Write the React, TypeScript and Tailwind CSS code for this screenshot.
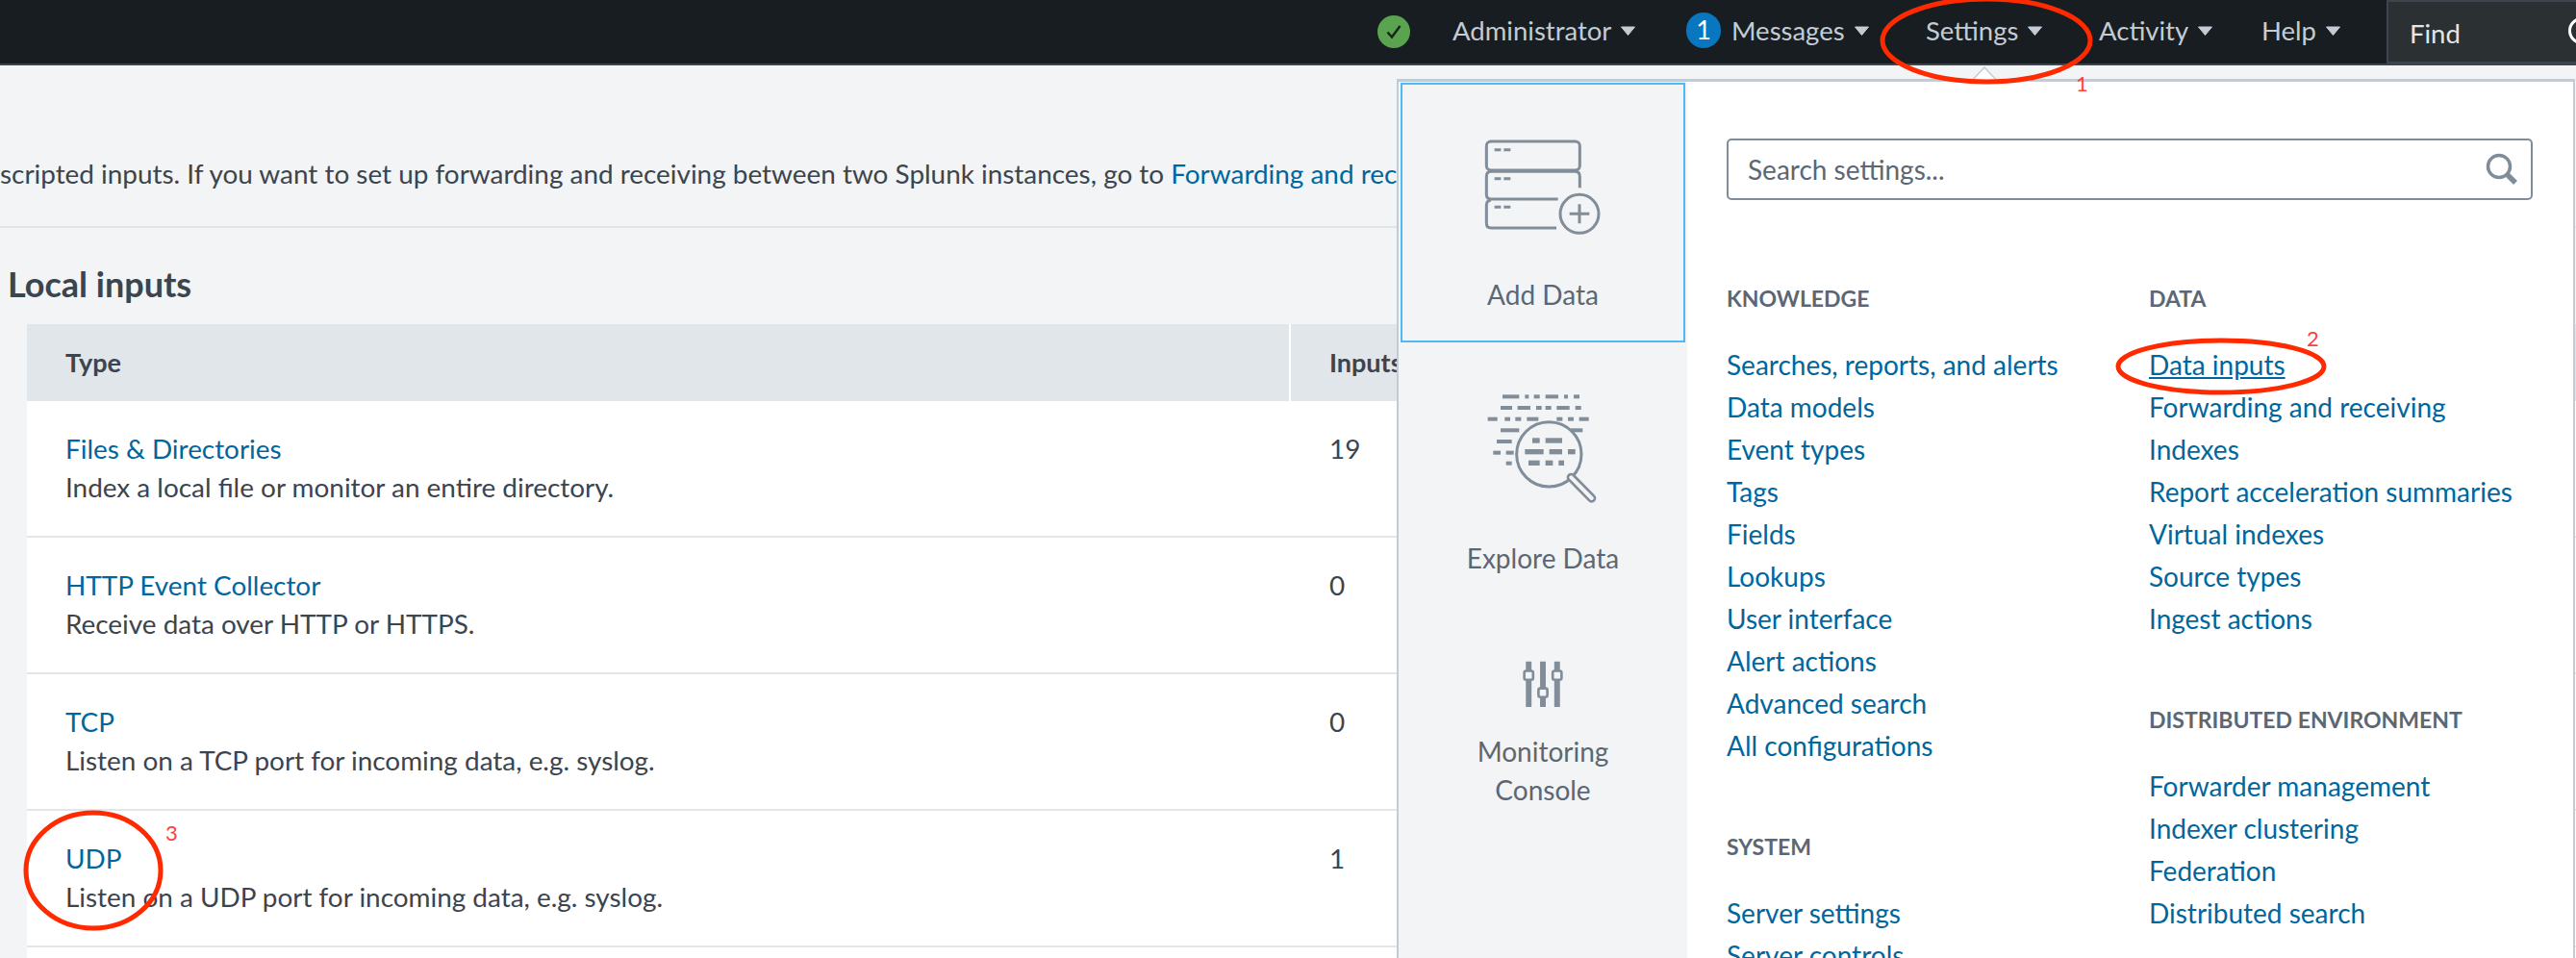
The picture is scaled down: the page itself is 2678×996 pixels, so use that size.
import React from "react";

const FONT = "font-['Lato','Open_Sans',sans-serif]";

function Caret({ className = "" }: { className?: string }) {
  return (
    <svg width="15" height="10" viewBox="0 0 15 10" className={className}>
      <path d="M0.5 1 H14.5 L7.5 9.5 Z" fill="#c3cbd4" stroke="#c3cbd4" strokeLinejoin="round" />
    </svg>
  );
}

function NavItem({ label, width }: { label: string; width: string }) {
  return (
    <div className={`flex shrink-0 items-center gap-[10px] pb-[3px] ${width}`}>
      <span className="text-[27.5px] leading-[32px] text-[#c3cbd4]">{label}</span>
      <Caret />
    </div>
  );
}

function TopBar() {
  return (
    <header className="flex h-[68px] items-center justify-end overflow-hidden border-b-2 border-[#3c444d] bg-[#171d21]">
      <svg width="34" height="34" viewBox="0 0 34 34" className="mr-[44px] shrink-0">
        <circle cx="17" cy="17" r="17" fill="#5ba44f" />
        <path d="M10.5 17.5 L15 22.5 L23.5 11" fill="none" stroke="#17251a" strokeWidth="2.4" />
      </svg>
      <NavItem label="Administrator" width="w-[243px]" />
      <div className="mb-[4px] mr-[11px] flex h-[37px] w-[36px] shrink-0 items-center justify-center rounded-full bg-[#0877bf] text-[27px] text-white">
        1
      </div>
      <NavItem label="Messages" width="w-[202px]" />
      <NavItem label="Settings" width="w-[180px]" />
      <NavItem label="Activity" width="w-[169px]" />
      <NavItem label="Help" width="w-[130px]" />
      <div className="relative h-[66px] w-[197px] shrink-0 overflow-hidden border-y-2 border-l-2 border-[#3c444d] bg-[#2b3033] pl-[22px] pt-[15px] text-[27.5px] leading-[36px] text-[#e1e6eb]">
        Find
        <div className="absolute left-[187px] top-[16px] h-[28px] w-[28px] rounded-full border-[3px] border-white" />
      </div>
    </header>
  );
}

const rows = [
  { title: "Files & Directories", desc: "Index a local file or monitor an entire directory.", n: "19" },
  { title: "HTTP Event Collector", desc: "Receive data over HTTP or HTTPS.", n: "0" },
  { title: "TCP", desc: "Listen on a TCP port for incoming data, e.g. syslog.", n: "0" },
  { title: "UDP", desc: "Listen on a UDP port for incoming data, e.g. syslog.", n: "1" },
];

function PageBody() {
  return (
    <main className="overflow-hidden">
      <div className="h-[169px] border-b-2 border-[#dfe4e8] pt-[92px]">
        <p className="whitespace-nowrap text-[27.9px] leading-[40px] text-[#3c444d]">
          scripted inputs. If you want to set up forwarding and receiving between two Splunk instances, go to{" "}
          <span className="text-[#00669e]">Forwarding and receiving.</span>
        </p>
      </div>
      <h2 className="pl-[8px] pt-[38px] text-[36px] font-bold leading-[40px] text-[#3c444d]">Local inputs</h2>
      <div className="ml-[28px] mt-[22px]">
        <div className="flex h-[80px] items-center bg-[#e1e6ea] text-[27px] font-bold text-[#3c444d]">
          <div className="flex h-full w-[1314px] items-center border-r-2 border-white pl-[40px]">Type</div>
          <div className="pl-[40px]">Inputs</div>
        </div>
        {rows.map((r) => (
          <div key={r.title} className="flex h-[142px] border-b-2 border-[#e1e6ea] bg-white pt-[29px] text-[27.9px] leading-[40px]">
            <div className="w-[1314px] pl-[40px]">
              <div className="text-[#00669e]">{r.title}</div>
              <div className="text-[#3c444d]">{r.desc}</div>
            </div>
            <div className="pl-[40px] text-[#3c444d]">{r.n}</div>
          </div>
        ))}
        <div className="h-[20px] bg-white" />
      </div>
    </main>
  );
}

const SG = "#818d99";

function AddDataIcon() {
  return (
    <svg width="122" height="102" viewBox="310 218 366 306" fill="none" stroke={SG} strokeWidth="9">
      <rect x="317" y="227" width="291" height="90" rx="14" />
      <path d="M608 372 V336 Q608 321 594 321 H331 Q317 321 317 336 V392 Q317 407 331 407 H540" />
      <path d="M331 411 Q317 411 317 426 V482 Q317 497 331 497 H535" />
      <circle cx="607" cy="453" r="60" />
      <path d="M576 453 H638 M607 423 V483" />
      <path d="M342 253 H362 M371 253 H392 M342 343 H362 M371 343 H392 M342 432 H362 M371 432 H392" />
    </svg>
  );
}

const dashes: [number, number, number, number][] = [
  [358, 410, 95, 12], [428, 440, 95, 12], [456, 474, 95, 12], [492, 532, 95, 12], [550, 562, 95, 12], [580, 598, 95, 12],
  [352, 388, 130, 12], [405, 445, 130, 12], [463, 480, 130, 12], [492, 510, 130, 12], [527, 567, 130, 12], [585, 603, 130, 12],
  [312, 342, 165, 12], [365, 382, 165, 12], [398, 416, 165, 12], [434, 470, 165, 12], [527, 545, 165, 12], [562, 580, 165, 12], [597, 627, 165, 12],
  [352, 410, 200, 12], [570, 608, 200, 12],
  [340, 387, 235, 12], [451, 474, 232, 16], [492, 544, 232, 16],
  [329, 352, 270, 12], [369, 393, 270, 12], [428, 486, 267, 16], [504, 544, 267, 16], [562, 585, 267, 16],
  [369, 387, 303, 12], [439, 474, 302, 16], [492, 515, 302, 16], [533, 550, 302, 16],
];

function ExploreIcon() {
  return (
    <svg width="116" height="115" viewBox="310 88 348 345" fill="none">
      {dashes.map(([a, b, y, h], i) => (
        <rect key={i} x={a} y={y - h / 2} width={b - a} height={h} fill={SG} />
      ))}
      <circle cx="503" cy="275" r="101" stroke={SG} strokeWidth="9" />
      <line x1="572" y1="347" x2="636" y2="412" stroke={SG} strokeWidth="28" strokeLinecap="round" />
      <line x1="572" y1="347" x2="636" y2="412" stroke="#f2f4f5" strokeWidth="12" strokeLinecap="round" />
    </svg>
  );
}

function MonitorIcon() {
  return (
    <svg width="44" height="50" viewBox="425 908 134 150">
      <path d="M438 912 H456 V1056 H438 Z M483 912 H501 V1056 H483 Z M528 912 H546 V1056 H528 Z" fill={SG} />
      <rect x="433" y="942" width="28" height="28" rx="6" fill="#f2f4f5" stroke={SG} strokeWidth="8" />
      <rect x="478" y="997" width="28" height="28" rx="6" fill="#f2f4f5" stroke={SG} strokeWidth="8" />
      <rect x="523" y="942" width="28" height="28" rx="6" fill="#f2f4f5" stroke={SG} strokeWidth="8" />
    </svg>
  );
}

function Sidebar() {
  return (
    <aside className="flex w-[300px] shrink-0 flex-col items-center bg-[#f2f4f5] text-center text-[28px] leading-[40px] text-[#5c6773]">
      <div className="mt-[1px] flex h-[270px] w-[296px] flex-col items-center border-2 border-[#4fb8f5] pt-[56px]">
        <AddDataIcon />
        <div className="mt-[40px]">Add Data</div>
      </div>
      <div className="mt-[54px]"><ExploreIcon /></div>
      <div className="mt-[35px]">Explore Data</div>
      <div className="mt-[86px]"><MonitorIcon /></div>
      <div className="mt-[25px]">Monitoring</div>
      <div>Console</div>
    </aside>
  );
}

function Section({ title, links, className = "" }: { title: string; links: string[]; className?: string }) {
  return (
    <section className={className}>
      <h3 className="mb-[32px] text-[23px] font-bold leading-[30px] text-[#5c6773]">{title}</h3>
      <ul className="text-[28px] leading-[44px] text-[#00669e]">
        {links.map((l) => (
          <li key={l} className={l === "Data inputs" ? "underline" : ""}>{l}</li>
        ))}
      </ul>
    </section>
  );
}

function SettingsMenu() {
  return (
    <div className="absolute left-[1452px] top-[82px] flex h-[914px] w-[1225px] overflow-hidden border-x-2 border-t-[3px] border-[#c3cbd4] bg-white">
      <Sidebar />
      <div className="flex-1 pl-[41px] pt-[59px]">
        <div className="flex h-[64px] w-[838px] items-center justify-between rounded-[5px] border-2 border-[#7f8c99] pl-[20px] pr-[12px] text-[28px] text-[#5c6773]">
          <span>Search settings...</span>
          <svg width="36" height="36" viewBox="0 0 36 36" fill="none" stroke="#7f8c99">
            <circle cx="15" cy="15" r="11.5" strokeWidth="3.5" />
            <path d="M23 23 L32 32" strokeWidth="5.5" />
          </svg>
        </div>
        <div className="mt-[87px] flex">
          <div className="w-[439px]">
            <Section
              title="KNOWLEDGE"
              links={["Searches, reports, and alerts", "Data models", "Event types", "Tags", "Fields", "Lookups", "User interface", "Alert actions", "Advanced search", "All configurations"]}
            />
            <Section title="SYSTEM" links={["Server settings", "Server controls"]} className="mt-[68px]" />
          </div>
          <div>
            <Section
              title="DATA"
              links={["Data inputs", "Forwarding and receiving", "Indexes", "Report acceleration summaries", "Virtual indexes", "Source types", "Ingest actions"]}
            />
            <Section title="DISTRIBUTED ENVIRONMENT" links={["Forwarder management", "Indexer clustering", "Federation", "Distributed search"]} className="mt-[68px]" />
          </div>
        </div>
      </div>
    </div>
  );
}

function MenuPointer() {
  return (
    <svg width="34" height="16" viewBox="0 0 34 16" className="absolute left-[2046px] top-[69px]">
      <path d="M17 1 L31 16 H3 Z" fill="white" stroke="#c3cbd4" strokeWidth="1.5" />
    </svg>
  );
}

function Annotations() {
  return (
    <>
      <svg width="2678" height="996" viewBox="0 0 2678 996" fill="none" stroke="#ff2a00" strokeWidth="5" className="pointer-events-none absolute left-0 top-0">
        <ellipse cx="2065" cy="42" rx="108" ry="43" />
        <ellipse cx="2309" cy="381" rx="107" ry="27" />
        <ellipse cx="97" cy="905" rx="70" ry="60" />
      </svg>
      <span className="absolute left-[2158px] top-[74px] text-[22px] leading-[26px] text-[#ff4040]">1</span>
      <span className="absolute left-[2398px] top-[339px] text-[22px] leading-[26px] text-[#ff4040]">2</span>
      <span className="absolute left-[172px] top-[853px] text-[22px] leading-[26px] text-[#ff4040]">3</span>
    </>
  );
}

export default function App() {
  return (
    <div className={`relative h-[996px] w-[2678px] overflow-hidden bg-[#f2f4f5] ${FONT}`}>
      <TopBar />
      <PageBody />
      <SettingsMenu />
      <MenuPointer />
      <Annotations />
    </div>
  );
}
